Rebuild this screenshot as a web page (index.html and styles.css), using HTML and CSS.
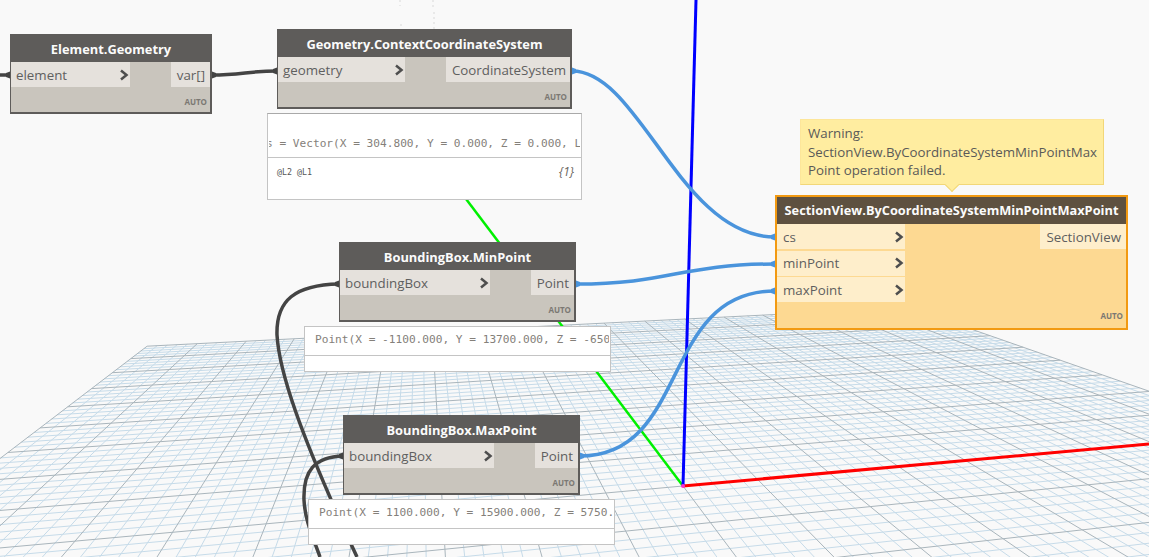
FILE: index.html
```html
<!DOCTYPE html>
<html lang="en">
<head>
<meta charset="utf-8">
<title>Dynamo graph</title>
<link rel="stylesheet" href="styles.css">
</head>
<body>
<main class="canvas">
  <svg class="scene" id="scene" viewBox="0 0 1149 557" xmlns="http://www.w3.org/2000/svg">
    <g id="grid"></g>
    <path class="ghost" d="M400 0V6M401 24V30M433 0V8M434 12V30"/>
    <line class="axis axis-x" x1="683" y1="486" x2="1149" y2="444"/>
    <line class="axis axis-y" x1="683" y1="486" x2="460" y2="191"/>
    <line class="axis axis-z" x1="683" y1="486" x2="696" y2="0"/>
    <circle class="origin" cx="683" cy="486" r="2"/>
  </svg>

  <svg class="scene" viewBox="0 0 1149 557" xmlns="http://www.w3.org/2000/svg">
    <path class="wire wire-dark" d="M339 284C295 285 276 300 277 335C279 370 298 430 357 557"/>
    <path class="wire wire-dark" d="M343 456C315 457 303 470 304 500C305 520 312 535 320 557"/>
  </svg>

  <article class="node node-element">
    <h2 class="title">Element.Geometry</h2>
    <div class="body">
      <div class="ports">
        <div class="port">element<svg class="chev" viewBox="0 0 8 10"><path d="M1 .5L6.500 5L1 9.500"/></svg></div>
      </div>
      <div class="port out">var[]</div>
    </div>
    <span class="lacing">AUTO</span>
  </article>

  <article class="node node-context">
    <h2 class="title">Geometry.ContextCoordinateSystem</h2>
    <div class="body">
      <div class="ports">
        <div class="port">geometry<svg class="chev" viewBox="0 0 8 10"><path d="M1 .5L6.500 5L1 9.500"/></svg></div>
      </div>
      <div class="port out">CoordinateSystem</div>
    </div>
    <span class="lacing">AUTO</span>
  </article>

  <section class="preview preview-vector">
    <div class="value"><code class="scrolled">s = Vector(X = 304.800, Y = 0.000, Z = 0.000, Length = 304.800)</code></div>
    <div class="levels"><span class="at">@L2 @L1</span><span class="count">{1}</span></div>
  </section>

  <article class="node node-min">
    <h2 class="title">BoundingBox.MinPoint</h2>
    <div class="body">
      <div class="ports">
        <div class="port">boundingBox<svg class="chev" viewBox="0 0 8 10"><path d="M1 .5L6.500 5L1 9.500"/></svg></div>
      </div>
      <div class="port out">Point</div>
    </div>
    <span class="lacing">AUTO</span>
  </article>

  <section class="preview preview-min">
    <div class="value value-short"><code>Point(X = -1100.000, Y = 13700.000, Z = -6500.000)</code></div>
    <div class="levels levels-short"></div>
  </section>

  <article class="node node-max">
    <h2 class="title">BoundingBox.MaxPoint</h2>
    <div class="body">
      <div class="ports">
        <div class="port">boundingBox<svg class="chev" viewBox="0 0 8 10"><path d="M1 .5L6.500 5L1 9.500"/></svg></div>
      </div>
      <div class="port out">Point</div>
    </div>
    <span class="lacing">AUTO</span>
  </article>

  <section class="preview preview-max">
    <div class="value value-short"><code>Point(X = 1100.000, Y = 15900.000, Z = 5750.000)</code></div>
    <div class="levels levels-short"></div>
  </section>

  <aside class="tooltip">Warning:<br>SectionView.ByCoordinateSystemMinPointMax<br>Point operation failed.</aside>

  <article class="node node-warn">
    <h2 class="title">SectionView.ByCoordinateSystemMinPointMaxPoint</h2>
    <div class="body">
      <div class="ports">
        <div class="port">cs<svg class="chev" viewBox="0 0 8 10"><path d="M1 .5L6.500 5L1 9.500"/></svg></div>
        <div class="port">minPoint<svg class="chev" viewBox="0 0 8 10"><path d="M1 .5L6.500 5L1 9.500"/></svg></div>
        <div class="port">maxPoint<svg class="chev" viewBox="0 0 8 10"><path d="M1 .5L6.500 5L1 9.500"/></svg></div>
      </div>
      <div class="port out">SectionView</div>
    </div>
    <span class="lacing">AUTO</span>
  </article>

  <svg class="scene scene-top" viewBox="0 0 1149 557" xmlns="http://www.w3.org/2000/svg">
    <path class="wire wire-dark" d="M0 75H8"/>
    <path class="wire wire-dark" d="M212 75C240 75 250 71 277 71"/>
    <path class="wire wire-blue" d="M572 71C640 71 680 237 775 237"/>
    <path class="wire wire-blue" d="M576 284C670 284 680 264 775 264"/>
    <path class="wire wire-blue" d="M580 456C690 456 660 291 775 291"/>
    <g class="caps-dark">
      <path d="M10 71.500L6 73V77L10 78.500Z"/>
      <path d="M212 71.500L216 73V77L212 78.500Z"/>
      <path d="M277 67.500L273 69V73L277 74.500Z"/>
      <path d="M339 280.500L335 282V286L339 287.500Z"/>
      <path d="M343 452.500L339 454V458L343 459.500Z"/>
    </g>
    <g class="caps-blue">
      <path d="M572 67.500L576 69V73L572 74.500Z"/>
      <path d="M576 280.500L580 282V286L576 287.500Z"/>
      <path d="M580 452.500L584 454V458L580 459.500Z"/>
      <path d="M775 233.500L771 235V239L775 240.500Z"/>
      <path d="M775 260.500L771 262V266L775 267.500Z"/>
      <path d="M775 287.500L771 289V293L775 294.500Z"/>
    </g>
  </svg>
</main>
<script src="grid.js"></script>
</body>
</html>
```

FILE: styles.css
```css
* { box-sizing: border-box; }

html, body { margin: 0; height: 100%; overflow: hidden; }

body { background: #f9f9f9; font-family: "Open Sans", "Liberation Sans", sans-serif; }

.canvas { position: relative; width: 1149px; height: 557px; overflow: hidden; }

.scene { position: absolute; inset: 0; width: 1149px; height: 557px; pointer-events: none; }

.ghost { fill: none; stroke: #e4e4e4; stroke-width: 1.500; stroke-dasharray: 2 3; }

.grid-minor { stroke: #c6dbe9; stroke-width: 1; }
.grid-major { stroke: #a9b5bc; stroke-width: 1; }

.axis { stroke-width: 3; }
.axis-x { stroke: #ff0000; }
.axis-y { stroke: #00f000; stroke-width: 2.500; }
.axis-z { stroke: #0000ff; }
.origin { fill: #ff33cc; }

.wire { fill: none; stroke-width: 3.500; }
.wire-dark { stroke: #444444; }
.wire-blue { stroke: #4a94dc; }
.caps-dark { fill: #444444; }
.caps-blue { fill: #4a94dc; }

.node {
  position: absolute;
  display: flex;
  flex-direction: column;
  height: 80px;
  border: 1px solid #5e5c5a;
  border-width: 1px 2px 2px 1px;
  background: #c9c5bd;
  color: #5f5f5f;
  font-size: 13.330px;
}

.node-element { left: 10px; top: 34px; width: 202px; }
.node-context { left: 277px; top: 29px; width: 295px; }
.node-min { left: 339px; top: 242px; width: 237px; }
.node-max { left: 343px; top: 415px; width: 237px; }

.title {
  margin: 0;
  flex: none;
  height: 27px;
  padding-left: 1px;
  background: #5e5c5a;
  color: #fbfbfb;
  font-size: 12.850px;
  font-weight: 700;
  line-height: 29px;
  text-align: center;
  white-space: nowrap;
}

.body { display: flex; justify-content: space-between; align-items: flex-start; }

.ports { display: flex; flex-direction: column; gap: 1px; width: 119px; }

.port {
  display: flex;
  align-items: center;
  justify-content: space-between;
  height: 25px;
  padding: 0 2px 0 5px;
  background: #e5e1dc;
  white-space: nowrap;
}

.node-min .ports, .node-max .ports { width: 150px; }
.node-context .ports { width: 127px; }

.out { padding: 0 5px 0 6px; }
.node-context .out { padding-right: 4px; }

.chev { width: 8px; height: 10px; flex: none; overflow: visible; }
.chev path { fill: none; stroke: #4e4e4e; stroke-width: 2.500; }

.lacing {
  position: absolute;
  right: 3px;
  bottom: 5px;
  color: #7b7873;
  font-size: 8px;
  font-weight: 700;
  line-height: 10px;
}

.node-warn {
  left: 775px;
  top: 195px;
  width: 353px;
  height: 135px;
  border: 2px solid #f29a12;
  background: #fdd992;
}

.node-warn .title { height: 27px; padding-left: 0; background: #5e5140; font-size: 12.800px; line-height: 27px; }
.node-warn .port { background: #feeecb; padding-left: 6px; }
.node-warn .port.out { padding-right: 5px; }
.node-warn .ports { gap: 1.500px; width: 128px; }
.node-warn .lacing { bottom: 7px; }

.preview {
  position: absolute;
  display: flex;
  flex-direction: column;
  border: 1px solid #c4c4c4;
  background: #ffffff;
  overflow: hidden;
  color: #84807a;
}

.preview-vector { left: 267px; top: 113px; width: 315px; height: 87px; border-top-color: #a9a9a9; }
.preview-min { left: 304px; top: 326px; width: 307px; height: 46px; }
.preview-max { left: 308px; top: 499px; width: 307px; height: 46px; }

.value {
  flex: none;
  height: 44px;
  padding: 0 1px 0 1px;
  overflow: hidden;
  border-bottom: 1px solid #c4c4c4;
  white-space: nowrap;
  line-height: 59px;
}

.value-short { height: 29px; padding: 0 1px 0 10px; line-height: 26px; }

.value code {
  display: block;
  overflow: hidden;
  font-family: "DejaVu Sans Mono", "Liberation Mono", monospace;
  font-size: 11.150px;
}

.scrolled { text-indent: -3px; }

.levels {
  display: flex;
  justify-content: space-between;
  padding: 7px 7px 0 9px;
  line-height: 14px;
}

.levels-short { padding: 0; }

.at {
  color: #555555;
  font-family: "DejaVu Sans Mono", "Liberation Mono", monospace;
  font-size: 8.300px;
}

.count { color: #6b6660; font-size: 12px; font-style: italic; }

.tooltip {
  position: absolute;
  left: 800px;
  top: 119px;
  width: 304px;
  height: 66px;
  padding: 4px 0 0 7px;
  border: 1px solid #fde69a;
  border-right-color: #f2d778;
  border-bottom-color: #f2d778;
  background: #ffeda0;
  color: #5a5a58;
  font-size: 13.300px;
  line-height: 18.500px;
  white-space: nowrap;
}

.tooltip::after {
  content: "";
  position: absolute;
  left: 146px;
  top: 60px;
  width: 9px;
  height: 9px;
  transform: rotate(45deg);
  border-right: 1px solid #f2d778;
  border-bottom: 1px solid #f2d778;
  background: #ffeda0;
}
```

FILE: grid.js
```js
// Perspective floor grid: maps world (X, Y) in [-1, 1] to the screen by a homography.
(function () {
  var NS = "http://www.w3.org/2000/svg";
  var group = document.getElementById("grid");
  var O = [683, 486], VX = [4830, 110], VY = [421, 137];
  var A = 0.1644, B = 0.854, HALF = 45, MAJOR = 5;

  function project(X, Y) {
    var w = A * X + B * Y + 1;
    return [
      (A * X * VX[0] + B * Y * VY[0] + O[0]) / w,
      (A * X * VX[1] + B * Y * VY[1] + O[1]) / w
    ];
  }

  function addLine(p, q, cls) {
    var l = document.createElementNS(NS, "line");
    l.setAttribute("x1", p[0].toFixed(1));
    l.setAttribute("y1", p[1].toFixed(1));
    l.setAttribute("x2", q[0].toFixed(1));
    l.setAttribute("y2", q[1].toFixed(1));
    l.setAttribute("class", cls);
    group.appendChild(l);
  }

  // Near edge stops short of the camera plane, well past the bottom of the window.
  var NEAR = -0.9;
  [false, true].forEach(function (majorPass) {
    for (var i = -HALF; i <= HALF; i++) {
      var isMajor = i % MAJOR === 0;
      if (isMajor !== majorPass) continue;
      var t = i / HALF;
      var cls = isMajor ? "grid-major" : "grid-minor";
      addLine(project(t, NEAR), project(t, 1), cls);
      if (t >= NEAR) addLine(project(-1, t), project(1, t), cls);
    }
  });
})();
```
